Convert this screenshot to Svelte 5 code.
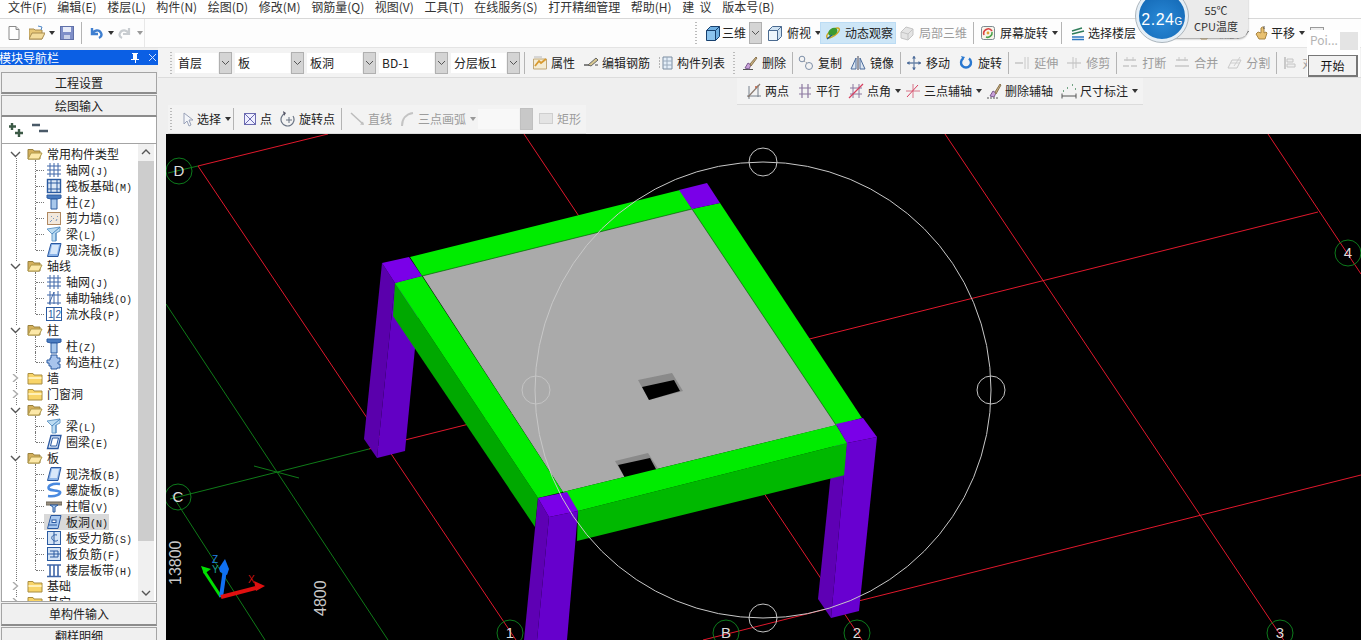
<script>
  const menus = ['文件(F)', '编辑(E)', '楼层(L)', '构件(N)', '绘图(D)', '修改(M)', '钢筋量(Q)', '视图(V)', '工具(T)', '在线服务(S)', '打开精细管理', '帮助(H)', '建\u00a0\u00a0议', '版本号(B)'];

  const icons = {
    file: `<path d="M3 1.500h7l3 3v10H3z" fill="#fff" stroke="#8a8a8a"/><path d="M10 1.500v3h3" fill="#ddd" stroke="#8a8a8a"/>`,
    open: `<path d="M0 4h5l1 1h7v9H0z" fill="#e8c878" stroke="#a88c50"/><path d="M0 14l3-6h13l-3 6z" fill="#f3dc9c" stroke="#a88c50"/><path d="M9 1l4 1-1 3" fill="none" stroke="#4c86c8"/>`,
    save: `<rect x="1.500" y="1.500" width="13" height="13" fill="#7f8fc8" stroke="#6070a8"/><rect x="4" y="2" width="8" height="5" fill="#e8ecf8"/><rect x="5" y="10" width="6" height="4" fill="#c8d0e8"/>`,
    undo: `<path d="M4 3v6h6M4.500 8.500C6 5 11 4 13 8c1 2 0 4-2 5" fill="none" stroke="#3f7fd0" stroke-width="2.400"/>`,
    redo: `<path d="M12 3v6H6M11.500 8.500C10 5 5 4 3 8c-1 2 0 4 2 5" fill="none" stroke="#c8ccd0" stroke-width="2.200"/>`,
    cube: `<path d="M1.500 5.500l4-4h9v10l-4 4h-9z" fill="#6fb0e2" stroke="#17406e"/><path d="M1.500 5.500h9v10M10.500 5.500l4-4" fill="none" stroke="#17406e"/><path d="M2 6h8v9H2z" fill="#8cc4ee"/>`,
    cubeLight: `<path d="M1.500 5.500l4-4h9v10l-4 4h-9z" fill="#cfe2f2" stroke="#4a6a90"/><path d="M1.500 5.500h9v10M10.500 5.500l4-4" fill="none" stroke="#4a6a90"/><path d="M2 6h8v9H2z" fill="#eef6fc"/>`,
    orbit: `<ellipse cx="8" cy="8" rx="7.500" ry="3" transform="rotate(-35 8 8)" fill="none" stroke="#d0a820" stroke-width="1.500"/><ellipse cx="8.500" cy="7" rx="5" ry="3.600" transform="rotate(-35 8 8)" fill="#3c9a30"/><path d="M2 14l5-4" stroke="#1f5a8a" stroke-width="1.500"/>`,
    cubeGray: `<path d="M2 7l5-5 7 2v6l-5 5-7-2z" fill="#e4e4e4" stroke="#c4c4c4"/><path d="M2 7l7 2v6M9 9l5-5" fill="none" stroke="#c4c4c4"/>`,
    screen: `<rect x="1.500" y="1.500" width="13" height="13" rx="2" fill="#f8f4ea" stroke="#7a8a90"/><path d="M4 10a4.500 4.500 0 0 1 8-4" fill="none" stroke="#d84040" stroke-width="1.600"/><path d="M12 7a4.500 4.500 0 0 1-6 5" fill="none" stroke="#48a048" stroke-width="1.600"/><circle cx="8" cy="8" r="1.400" fill="#e0a030"/>`,
    floors: `<path d="M2 6l10-3M2 9l12-3" fill="none" stroke="#2f7d5a" stroke-width="1.400"/><path d="M2 12h12M2 14.500h12" stroke="#2f78c0" stroke-width="1.400"/>`,
    hand: `<path d="M3 9l3 5h6l2-6-1-1-2 1V3l-1.500-1L8 3v5L5 7z" fill="#e8c070" stroke="#a88440"/><path d="M11 1v3" stroke="#555"/>`,
    view: `<rect x="1.500" y="2.500" width="13" height="11" fill="#eee" stroke="#999"/><path d="M3 11l4-4 3 3 3-4" fill="none" stroke="#aaa"/>`,
    prop: `<path d="M1.500 4h13v10h-13z" fill="#f4ecd4" stroke="#c0a878"/><path d="M3 11l4-5 2 2 5-4" fill="none" stroke="#d89a30" stroke-width="1.800"/><path d="M2 2h8" stroke="#b8b8b8"/>`,
    pencil: `<path d="M1 10h7" stroke="#444" stroke-width="1.300"/><path d="M5 10l8-7 2 2-7 6z" fill="#d8c890" stroke="#666"/><path d="M12 10h3" stroke="#444"/>`,
    list: `<path d="M5 2h9v12H5z" fill="#e4eef8" stroke="#7a8ca0"/><path d="M9 2v12M5 6h9M5 10h9" stroke="#9aaabc"/><path d="M1 3h2M1 6h2M1 9h2M1 12h2" stroke="#777" stroke-dasharray="1 1"/>`,
    erase: `<path d="M1 14.500h10" stroke="#555"/><path d="M3 13l3-5 3 2-2 4z" fill="#c8a0d8" stroke="#7a5a90"/><path d="M8 9l6-7 1 1-6 8z" fill="#c8b080" stroke="#8a7450"/>`,
    copy: `<circle cx="4" cy="4" r="2.800" fill="none" stroke="#7d8fa8"/><circle cx="11" cy="11" r="3.500" fill="none" stroke="#7d8fa8"/><path d="M6 6l3 2" stroke="#999" stroke-dasharray="1.500 1"/>`,
    mirror: `<path d="M8 1v14" stroke="#445" /><path d="M6 3v11H1zM10 3v11h5z" fill="#dce6f2" stroke="#4a6a9a"/>`,
    move: `<path d="M8 1v14M1 8h14" stroke="#6a84a8" stroke-width="1.300"/><path d="M8 1l-2 2.500h4zM8 15l-2-2.500h4zM1 8l2.500-2v4zM15 8l-2.500-2v4z" fill="#4a6a98"/>`,
    rotate: `<path d="M11 3.500a5 5 0 1 1-6 0" fill="none" stroke="#2a78d0" stroke-width="2.400"/><path d="M3 1l4 1-2 3z" fill="#2a78d0"/>`,
    extend: `<path d="M1 8h8" stroke="#c4c4c4" stroke-width="1.500"/><path d="M11 2v12M14 2v12" stroke="#c8c8c8"/>`,
    trim: `<path d="M1 8h14" stroke="#ccc" stroke-width="1.500"/><path d="M7 2v12M10 3v10" stroke="#c4c4c4"/>`,
    breakIc: `<path d="M1 11h6M9 11h6M2 5h12" stroke="#c8c8c8" stroke-width="1.500"/><path d="M5 2v4M11 2v4" stroke="#c8c8c8"/>`,
    merge: `<path d="M1 11h14M2 5h12" stroke="#c8c8c8" stroke-width="1.500"/><path d="M5 2v4M11 2v4" stroke="#c8c8c8"/>`,
    split: `<path d="M2 13l4-8h9l-4 8z" fill="none" stroke="#c8c8c8"/><path d="M4 8h10M14 2L8 11" stroke="#cfcfcf"/>`,
    align: `<path d="M3 2v12" stroke="#bbb" stroke-width="1.500"/><path d="M5 4h6v3H5zM5 9h8v3H5z" fill="#eee" stroke="#c4c4c4"/>`,
    twoPt: `<path d="M1 13h14M3 3v13M12 2v12" stroke="#77808c"/><path d="M2 14L14 1" stroke="#8a7a70" stroke-width="1.200"/><circle cx="10" cy="4" r="1" fill="#c06040"/>`,
    para: `<path d="M2 5h12M2 11h12M5 1v14M11 1v14" stroke="#8c78a0" stroke-width="1.200"/>`,
    angle: `<path d="M2 5h12M2 11h12M5 1v14M11 1v14" stroke="#8c78a0"/><path d="M1 15L15 1" stroke="#d84060" stroke-width="1.200"/>`,
    three: `<path d="M1 8h14M8 1v14" stroke="#d8768a"/><path d="M2 14L13 2" stroke="#d84060"/>`,
    eraseAxis: `<path d="M1 15h11" stroke="#555" stroke-dasharray="2 1"/><path d="M4 13l3-5 3 2-2 4z" fill="#c8a0d8" stroke="#7a5a90"/><path d="M9 9l5-8 1 1-5 9z" fill="#c8b080" stroke="#8a7450"/>`,
    dim: `<path d="M1 13h14M1 10.500v5M15 10.500v5" stroke="#555"/><path d="M2 8h1M6 5h1M11 2h1M14 6h1" stroke="#4a8a60" stroke-width="1.500"/>`,
    cursor: `<path d="M4 2v11l3-3 2 5 2-1-2-5h4z" fill="#f4f6fa" stroke="#9aa2b8"/>`,
    point: `<rect x="2.500" y="2.500" width="11" height="11" fill="#eef" stroke="#6a6ab0"/><path d="M3 3l10 10M13 3L3 13" stroke="#6a6ab0"/>`,
    rotPt: `<path d="M13 5a6.500 6.500 0 1 1-8-2.500" fill="none" stroke="#6a7484" stroke-width="1.200"/><path d="M3 0l3 2-2 3z" fill="#556"/><path d="M9 6v6M6 9h6" stroke="#6a7484"/>`,
    line: `<path d="M1 2l12 11" stroke="#bcbcbc" stroke-width="1.500"/><path d="M14 14l-4-.500 3-3z" fill="#c0c0c0"/>`,
    arc: `<path d="M2 15C2 8 6 3 13 2" fill="none" stroke="#c4c4c4" stroke-width="2"/>`,
    rect: `<rect x="1.500" y="2.500" width="13" height="10" fill="#e4e4e4" stroke="#cfcfcf"/>`,
    folderOpen: `<path d="M1 3.500h5l1 1.500h6v8H1z" fill="#d4b05c" stroke="#98803c"/><path d="M1 13l3-6h11l-3 6z" fill="#fce8a8" stroke="#b09848"/>`,
    folder: `<path d="M1 3.500h5l1 1.500h8v9H1z" fill="#f8d468" stroke="#a88c40"/><path d="M1.500 7h13v2h-13z" fill="#fff0b8"/>`,
    grid: `<path d="M4 1v14M8 1v14M12 1v14M1 4h14M1 8h14M1 12h14" stroke="#3f66a8"/>`,
    raft: `<rect x="1.500" y="1.500" width="13" height="13" fill="#dce8f6" stroke="#2a5aa0" stroke-width="1.400"/><path d="M5 1v14M11 1v14M1 5h14M1 11h14" stroke="#2a5aa0"/>`,
    col: `<path d="M1 1h14v3l-4 1H5L1 4z" fill="#4a7cc0" stroke="#2a5aa0"/><path d="M5 5h6v10H5z" fill="#a8c8ec" stroke="#2a5aa0"/>`,
    wall: `<rect x="1.500" y="2.500" width="13" height="12" fill="#f2e8dc" stroke="#b08860"/><path d="M4 12l2-2M7 8l1 1M10 11l1-2M11 6l1 1M5 6l1 1" stroke="#7a98c0"/>`,
    beam: `<path d="M1 3l13-2v4l-4 2v8H6V8z" fill="#bcdcf2" stroke="#6a9cc8"/><path d="M6 8l8-7M10 7v8" stroke="#4a86c0"/>`,
    slab: `<path d="M5 1.500h10l-3 13H1.500z" fill="#8cb4e8" stroke="#2a58a0"/><path d="M6 3h7l-2 9H4z" fill="#d8e8fa"/>`,
    aux: `<path d="M1 13h14M1 5h14M4 1v14M12 1v14" stroke="#3f66a8"/><path d="M3 14L8 2M8 2v12" stroke="#3f66a8"/>`,
    seg: `<rect x="0.500" y="1.500" width="15" height="13" fill="#fff" stroke="#2a5aa0"/><path d="M8 1v14" stroke="#2a5aa0"/><text x="2" y="12" font-size="10" font-family="Liberation Sans" fill="#2a5aa0">1</text><text x="9.500" y="12" font-size="10" font-family="Liberation Sans" fill="#2a5aa0">2</text>`,
    struct: `<path d="M5 1h6v3h3v4h-2v2h2v4h-3v1H5v-3H3v-3H1V6h3V4h1z" fill="#a8c4ec" stroke="#2a5aa0"/>`,
    ring: `<path d="M5 1.500h10l-3 13H1.500z" fill="#d8e6f8" stroke="#2a58a0" stroke-width="1.300"/><path d="M6.500 4h6l-2 8h-6z" fill="#fff" stroke="#2a58a0"/>`,
    spiral: `<path d="M14 2C6 1 1 4 3 7c2 2 9 1 11 3 1 2-4 5-12 4" fill="none" stroke="#4a8ae0" stroke-width="2.600"/>`,
    cap: `<path d="M0 4h16v3H0z" fill="#9a9080" stroke="#6a6458"/><path d="M4 7h8l-3 2v5H7V9z" fill="#a8c8ec" stroke="#2a5aa0"/>`,
    hole: `<path d="M5 1.500h10l-3 13H1.500z" fill="#a8c8f0" stroke="#2a58a0"/><rect x="6" y="6" width="4" height="2.500" fill="#fff" stroke="#2a58a0"/><path d="M3 11h8" stroke="#2a58a0"/>`,
    bar: `<rect x="1.500" y="1.500" width="13" height="13" fill="#d4e4f6" stroke="#2a5aa0"/><path d="M11 5C7 4 5 7 6 9s4 3 6 1M8 2v12" fill="none" stroke="#2a5aa0"/>`,
    neg: `<rect x="1.500" y="1.500" width="13" height="13" fill="#d4e4f6" stroke="#2a5aa0"/><path d="M4 5h8v6H4M1 8h14M8 5v6" fill="none" stroke="#2a5aa0"/>`,
    strip: `<path d="M1 3h14M1 14.500h14" stroke="#3f66a8" stroke-width="1.400"/><path d="M4 3v11M8 3v11M12 3v11" stroke="#3f66a8" stroke-width="1.600"/>`
  };

  // m = extra space before the item, g = space between icon and label
  const fileTools = [
    { i: 'file', m: 6 }, { i: 'open', m: 7, caret: true }, { i: 'save', m: 4 }, { sep: true, m: 6 },
    { i: 'undo', m: 6, caret: true }, { i: 'redo', m: 3, caret: true, off: true }
  ];

  const viewTools = [
    { i: 'cube', t: '三维', combo: true, m: 8, g: 1 }, { i: 'cubeLight', t: '俯视', caret: true, m: 5 }, { i: 'orbit', t: '动态观察', on: true },
    { i: 'cubeGray', t: '局部三维', off: true, m: 4 }, { sep: true, m: 6 }, { i: 'screen', t: '屏幕旋转', caret: true, m: 6 }, { sep: true, m: 3 },
    { i: 'floors', t: '选择楼层', m: 8, g: 2 }, { i: 'hand', t: '缩放', caret: true, m: 59 }, { i: 'hand', t: '平移', caret: true, m: 4, g: 2 }, { i: 'view', m: 4 }
  ];

  const combos = [
    { t: '首层', w: 43 }, { t: '板', w: 55 }, { t: '板洞', w: 55 }, { t: 'BD-1', w: 55 }, { t: '分层板1', w: 55 }
  ];

  const editTools = [
    { i: 'prop', t: '属性', g: 3, m: 5 }, { i: 'pencil', t: '编辑钢筋', g: 3 }, { i: 'list', t: '构件列表', g: 3 }
  ];

  const modifyTools = [
    { i: 'erase', t: '删除' }, { sep: true }, { i: 'copy', t: '复制' }, { i: 'mirror', t: '镜像' }, { sep: true }, { i: 'move', t: '移动' }, { i: 'rotate', t: '旋转' }, { sep: true },
    { i: 'extend', t: '延伸', off: true }, { i: 'trim', t: '修剪', off: true }, { sep: true }, { i: 'breakIc', t: '打断', off: true }, { i: 'merge', t: '合并', off: true }, { i: 'split', t: '分割', off: true }, { sep: true }, { i: 'align', t: '对齐', off: true }
  ];

  const axisTools = [
    { i: 'twoPt', t: '两点', g: 3 }, { i: 'para', t: '平行', g: 3 }, { i: 'angle', t: '点角', caret: true, g: 3 }, { i: 'three', t: '三点辅轴', caret: true, g: 3 }, { i: 'eraseAxis', t: '删除辅轴', g: 3 }, { i: 'dim', t: '尺寸标注', caret: true, g: 3 }
  ];

  const drawTools = [
    { i: 'cursor', t: '选择', caret: true, g: 1 }, { sep: true }, { i: 'point', t: '点', g: 2 }, { i: 'rotPt', t: '旋转点', g: 3 }, { sep: true }, { i: 'line', t: '直线', off: true, g: 2 }, { i: 'arc', t: '三点画弧', caret: true, off: true, g: 2 }, { blank: true }, { i: 'rect', t: '矩形', off: true, g: 3 }
  ];

  const tree = [
    { t: '常用构件类型', open: true, kids: [['grid', '轴网', 'J'], ['raft', '筏板基础', 'M'], ['col', '柱', 'Z'], ['wall', '剪力墙', 'Q'], ['beam', '梁', 'L'], ['slab', '现浇板', 'B']] },
    { t: '轴线', open: true, kids: [['grid', '轴网', 'J'], ['aux', '辅助轴线', 'O'], ['seg', '流水段', 'P']] },
    { t: '柱', open: true, kids: [['col', '柱', 'Z'], ['struct', '构造柱', 'Z']] },
    { t: '墙', open: false, kids: [] },
    { t: '门窗洞', open: false, kids: [] },
    { t: '梁', open: true, kids: [['beam', '梁', 'L'], ['ring', '圈梁', 'E']] },
    { t: '板', open: true, kids: [['slab', '现浇板', 'B'], ['spiral', '螺旋板', 'B'], ['cap', '柱帽', 'V'], ['hole', '板洞', 'N'], ['bar', '板受力筋', 'S'], ['neg', '板负筋', 'F'], ['strip', '楼层板带', 'H']] },
    { t: '基础', open: false, kids: [] },
    { t: '其它', open: false, kids: [] }
  ];

  const redLines = [
    '198,166 328,134', '198,166 516,640', '369,449 1318,212', '524,134 862,640', '945,134 1285,642', '1268,134 1361,274', '703,640 1361,475'
  ];
  const greenLines = ['168,173 198,166', '170,499 369,449', '166,304 388,640', '172,495 265,640', '254,466 299,478'];
  const axes = [['D', 179, 171], ['C', 178, 497], ['1', 510, 633], ['B', 726, 633], ['2', 857, 633], ['3', 1280, 633], ['4', 1348, 253]];
  const handles = [[763, 162], [536, 390], [991, 390], [763, 618]];
</script>

{#snippet tool(x)}
  {#if x.sep}
    <span class="sep" style={x.m ? `margin-left:${x.m}px` : ''}></span>
  {:else if x.blank}
    <span class="combo disabled"><span class="field"></span><span class="drop"></span></span>
  {:else}
    <span class="tool" class:off={x.off} class:on={x.on} class:carets={x.caret} style={x.m ? `margin-left:${x.m}px` : ''}>
      <svg class="ic" viewBox="0 0 16 16">{@html icons[x.i]}</svg>
      {#if x.t}<span class="lab" style={x.g ? `margin-left:${x.g}px` : ''}>{x.t}</span>{/if}
      {#if x.combo}<span class="drop"><svg viewBox="0 0 9 6"><path d="M1 1l3.500 3.500L8 1" fill="none" stroke="#555" /></svg></span>{/if}
      {#if x.caret}<i class="caret"></i>{/if}
    </span>
  {/if}
{/snippet}

<div class="app">
  <nav class="menubar">
    {#each menus as m}<span>{m}</span>{/each}
  </nav>

  <div class="topbar">
    <div class="tools file">
      {#each fileTools as x}{@render tool(x)}{/each}
    </div>
    <div class="tools views">
      <i class="grip"></i>
      {#each viewTools as x}{@render tool(x)}{/each}
    </div>
  </div>

  <div class="workspace">
    <aside class="sidebar">
      <header>
        <span>模块导航栏</span>
        <svg viewBox="0 0 28 12"><path d="M3 1h6v1H8v5h2v1H7v3H6V8H2V7h2V2H3z" fill="#fff"/><path d="M20 2l7 7M27 2l-7 7" stroke="#cfe0ff"/></svg>
      </header>
      <button class="nav first">工程设置</button>
      <button class="nav">绘图输入</button>
      <div class="expand">
        <svg viewBox="0 0 42 16"><path d="M4 1v7M1 4.500h7M11 7v8M7 11h8" stroke="#3c5a46" stroke-width="2.400"/><path d="M24 3h8M31 9h9" stroke="#4a5a68" stroke-width="2.400"/></svg>
      </div>
      <div class="tree">
        <div class="rows">
          {#each tree as g}
            <div class="row root">
              <svg class="chev" viewBox="0 0 11 8">
                {#if g.open}<path d="M1 2l4.500 4.500L10 2" fill="none" stroke="#555" stroke-width="1.400"/>
                {:else}<path d="M3 0l4.500 4L3 8" fill="none" stroke="#aaa" stroke-width="1.400"/>{/if}
              </svg>
              <svg class="folder" viewBox="0 0 16 16">{@html icons[g.open ? 'folderOpen' : 'folder']}</svg>
              <span class="cn">{g.t}</span>
            </div>
            {#each g.kids as k, n}
              <div class="row kid" class:last={n === g.kids.length - 1}>
                <span class="item" class:sel={k[2] === 'N'}>
                  <svg class="ic" viewBox="0 0 16 16">{@html icons[k[0]]}</svg>
                  <span class="cn">{k[1]}<span class="key">({k[2]})</span></span>
                </span>
              </div>
            {/each}
          {/each}
        </div>
        <div class="scroll">
          <svg viewBox="0 0 16 17"><path d="M4 10l4-4 4 4" fill="none" stroke="#555" stroke-width="1.400"/></svg>
          <div class="track"><div class="thumb"></div></div>
          <svg viewBox="0 0 16 17"><path d="M4 7l4 4 4-4" fill="none" stroke="#555" stroke-width="1.400"/></svg>
        </div>
      </div>
      <button class="nav tall">单构件输入</button>
      <button class="nav cut">翻样明细</button>
    </aside>

    <section class="main">
      <div class="band property">
        <i class="grip"></i>
        {#each combos as c}
          <span class="combo"><span class="field" style="width:{c.w}px">{c.t}</span><span class="drop"><svg viewBox="0 0 9 6"><path d="M1 1l3.500 3.500L8 1" fill="none" stroke="#555" /></svg></span></span>
        {/each}
        <span class="sep first"></span>
        {#each editTools as x}{@render tool(x)}{/each}
        <i class="grip wide"></i>
        {#each modifyTools as x}{@render tool(x)}{/each}
      </div>
      <div class="band axis">
        {#each axisTools as x}{@render tool(x)}{/each}
      </div>
      <div class="band draw">
        <i class="grip"></i>
        {#each drawTools as x}{@render tool(x)}{/each}
      </div>

      <div class="canvas">
        <svg viewBox="166 134 1195 506" width="1195" height="506">
          {#each greenLines as p}<polyline points={p} class="gl" />{/each}
          {#each redLines as p}<polyline points={p} class="rl" />{/each}

          <!-- far left column -->
          <polygon points="382,263 395,283 377,458 364,439" fill="#5a00ac" />
          <polygon points="395,283 422,276 405,451 377,458" fill="#6200c4" />

          <!-- near right column, hidden side -->
          <polygon points="836,424 847,443 831,618 818,599" fill="#5e00b4" />

          <!-- slab and holes -->
          <polygon points="422,275 693,208 837,425 563,492" fill="#aaaaaa" />
          <polygon points="638,380 672,373 683,391 649,400" fill="#8a8a8a" />
          <polygon points="642,387 674,380 680,391 649,400" fill="#000" />
          <polygon points="615,461 648,453 659,470 625,478" fill="#8a8a8a" />
          <polygon points="618,465 650,458 657,471 625,478" fill="#000" />

          <!-- beams -->
          <polygon points="410,257 680,190 692,209 422,276" fill="#00ec00" />
          <polygon points="692,209 720,203 862,418 836,425" fill="#00ec00" />
          <polygon points="395,283 393,316 535,527 538,498" fill="#00a800" />
          <polygon points="395,283 422,276 563,492 538,498" fill="#00ec00" />
          <polygon points="578,511 847,443 845,475 577,541" fill="#00b800" />
          <polygon points="563,492 836,425 847,443 578,511" fill="#00ec00" />
          <polyline points="692,209 836,425" class="seam" />
          <polyline points="422,276 692,209" class="seam" />

          <!-- columns in front of the beams -->
          <polygon points="847,443 877,437 859,611 831,618" fill="#6800d0" />
          <polygon points="538,498 549,517 537,640 524,640" fill="#5e00b4" />
          <polygon points="549,517 578,511 567,640 537,640" fill="#6600cc" />

          <!-- column tops -->
          <polygon points="382,263 409,257 422,276 395,283" fill="#7a00e8" />
          <polygon points="679,190 707,183 720,203 692,209" fill="#7a00e8" />
          <polygon points="538,498 567,492 578,511 549,517" fill="#7a00e8" />
          <polygon points="836,424 863,418 877,437 847,443" fill="#7a00e8" />

          <!-- orbit handles -->
          <circle cx="763" cy="390" r="228" class="orbit" />
          {#each handles as h}<circle cx={h[0]} cy={h[1]} r="14" class="handle" />{/each}

          {#each axes as a}
            <circle cx={a[1]} cy={a[2]} r="13" class="bubble" />
            <text x={a[1]} y={a[2] + 5} class="tag">{a[0]}</text>
          {/each}

          <text transform="translate(181 585) rotate(-90)" class="dimtext">13800</text>
          <text transform="translate(326 616) rotate(-90)" class="dimtext">4800</text>

          <!-- axis triad -->
          <path d="M221 597L204 571" stroke="#00e000" stroke-width="3" />
          <path d="M201 566l10 3-7 5z" fill="#00e000" />
          <path d="M221 597L225 569" stroke="#1070f0" stroke-width="4" />
          <path d="M225 559l4 10-2 6-7-3-1-4z" fill="#1070f0" />
          <path d="M221 597L256 588" stroke="#e01010" stroke-width="4" />
          <path d="M265 586l-11-5 2 10z" fill="#e01010" />
          <text x="248" y="583" class="ax" fill="#d01010">X</text>
          <text x="212" y="563" class="ax" fill="#2080e0">Z</text>
          <text x="212" y="573" class="ax" fill="#20a090">Y</text>
        </svg>
      </div>
    </section>
  </div>

  <!-- floating cpu widget -->
  <div class="cpu">
    <div class="temp"><span>55℃</span><span>CPU温度</span></div>
    <div class="ball">2.24<small>G</small></div>
  </div>

  <div class="pop">
    <div class="poi"><span>Poi...</span><i></i></div>
    <button>开始</button>
  </div>
</div>

<style>
  :global(body) {
    margin: 0;
    overflow: hidden;
  }
  .app {
    position: relative;
    width: 1361px;
    height: 640px;
    overflow: hidden;
    background: #efefef;
    color: #222;
    font-family: "Noto Sans CJK SC", "Liberation Sans", sans-serif;
    font-size: 12px;
    line-height: 16px;
  }
  .menubar {
    display: flex;
    gap: 10.6px;
    height: 18px;
    padding-left: 8px;
    background: #fff;
    border-bottom: 1px solid #d8d8d8;
    align-items: flex-start;
    color: #333;
    line-height: 13px;
  }
  .topbar {
    display: flex;
    justify-content: space-between;
    height: 28px;
    background: #fdfdfd;
    border-bottom: 1px solid #e4e4e4;
  }
  .tools {
    display: flex;
    align-items: center;
  }
  .tools.file {
    padding-right: 1px;
    border-right: 1px solid #e8e8e8;
  }
  .tools.views {
    width: 666px;
    flex: none;
    overflow: hidden;
  }
  .grip {
    display: block;
    width: 2px;
    height: 22px;
    flex: none;
    background: repeating-linear-gradient(#bbb 0 1px, transparent 1px 3px);
  }
  .tool {
    display: inline-flex;
    align-items: center;
    height: 20px;
    white-space: nowrap;
    flex: none;
  }
  .lab {
    margin-left: 4px;
  }
  .tool.off {
    color: #9c9c9c;
  }
  .tool.on {
    background: #cde6f7;
    outline: 1px solid #bcdcf4;
    padding: 0 2px 0 4px;
  }
  .ic {
    width: 16px;
    height: 16px;
    flex: none;
  }
  .caret {
    width: 0;
    height: 0;
    margin-left: 4px;
    border: 3.500px solid transparent;
    border-top: 4px solid #333;
    border-bottom: 0;
  }
  .tool.off .caret {
    border-top-color: #999;
  }
  .sep {
    width: 1px;
    height: 22px;
    background: #b4b4b4;
    flex: none;
  }
  .drop {
    display: flex;
    align-items: center;
    justify-content: center;
    width: 13px;
    height: 22px;
    background: #d4d4d4;
    border: 1px solid #b0b0b0;
    box-sizing: border-box;
    flex: none;
  }
  .tool .drop {
    margin-left: 3px;
  }
  .drop svg {
    width: 9px;
    height: 6px;
  }
  .combo {
    display: flex;
    gap: 1px;
    align-items: center;
    flex: none;
  }
  .field {
    height: 20px;
    line-height: 20px;
    padding-left: 3px;
    box-sizing: border-box;
    background: #fff;
  }
  .combo.disabled {
    margin: 0 -3px 0 -2px;
  }
  .combo.disabled .field {
    width: 41px;
    background: #f8f8f8;
  }
  .combo.disabled .drop {
    background: #c8c8c8;
    border-color: #c0c0c0;
  }
  .workspace {
    display: flex;
    height: 592px;
  }
  .sidebar {
    width: 158px;
    height: 592px;
    flex: none;
    display: flex;
    flex-direction: column;
    padding-top: 2px;
    box-sizing: border-box;
    overflow: hidden;
  }
  .sidebar header {
    display: flex;
    justify-content: space-between;
    align-items: center;
    height: 15px;
    flex: none;
    padding-right: 1px;
    background: #0b5fe4;
    color: #fff;
    overflow: hidden;
  }
  .sidebar header span {
    margin-left: -1px;
  }
  .sidebar header svg {
    width: 28px;
    height: 12px;
  }
  .nav {
    flex: none;
    width: 156px;
    height: 22px;
    margin: 1px 0 0 1px;
    padding: 0;
    font: inherit;
    color: #222;
    background: #f0f0f0;
    border: 1px solid #a4a4a4;
    border-bottom: 2px solid #8c8c8c;
    box-sizing: border-box;
  }
  .nav.first {
    margin-top: 7px;
  }
  .nav.tall {
    height: 23px;
  }
  .nav.cut {
    height: 22px;
    padding-bottom: 7px;
  }
  .expand {
    height: 27px;
    flex: none;
    margin: 0 1px;
    padding-left: 6px;
    background: #fff;
    border: 1px solid #a4a4a4;
    border-width: 0 1px 1px;
    box-sizing: border-box;
    display: flex;
    align-items: center;
  }
  .expand svg {
    width: 42px;
    height: 16px;
  }
  .tree {
    flex: none;
    height: 458px;
    box-sizing: border-box;
    display: flex;
    margin: 0 1px;
    background: #fff;
    border: 1px solid #a4a4a4;
    border-top: 0;
    overflow: hidden;
    position: relative;
  }
  .rows {
    flex: 1;
    padding-top: 2px;
    overflow: hidden;
    position: relative;
  }
  .rows::before {
    content: "";
    position: absolute;
    left: 14px;
    top: 10px;
    bottom: 0;
    border-left: 1px dotted #777;
  }
  .row {
    position: relative;
    display: flex;
    align-items: center;
    height: 16px;
    white-space: nowrap;
  }
  .chev {
    position: relative;
    z-index: 1;
    width: 11px;
    height: 8px;
    margin-left: 8px;
    background: #fff;
    flex: none;
  }
  .folder {
    width: 16px;
    height: 16px;
    margin-left: 6px;
    flex: none;
  }
  .root .cn {
    margin-left: 4px;
  }
  .kid {
    padding-left: 42px;
  }
  .kid::before {
    content: "";
    position: absolute;
    left: 33px;
    top: -2px;
    height: 18px;
    border-left: 1px dotted #777;
  }
  .kid.last::before {
    height: 10px;
  }
  .kid::after {
    content: "";
    position: absolute;
    left: 34px;
    width: 8px;
    top: 8px;
    border-top: 1px dotted #777;
  }
  .item {
    display: flex;
    align-items: center;
    gap: 4px;
    padding: 0 1px 0 2px;
  }
  .item.sel {
    background: #d9d9d9;
  }
  .cn {
    height: 16px;
  }
  .key {
    font-family: "Liberation Mono", monospace;
    font-size: 10px;
  }
  .scroll {
    width: 16px;
    flex: none;
    display: flex;
    flex-direction: column;
    background: #f0f0f0;
    margin-right: 2px;
  }
  .scroll svg {
    width: 16px;
    height: 17px;
    flex: none;
  }
  .track {
    flex: 1;
  }
  .thumb {
    height: 380px;
    background: #cdcdcd;
  }
  .main {
    flex: 1;
    min-width: 0;
    display: flex;
    flex-direction: column;
  }
  .band {
    display: flex;
    align-items: center;
    gap: 8px;
    box-sizing: border-box;
    background: #f3f3f3;
    border-bottom: 1px solid #dcdcdc;
    white-space: nowrap;
    overflow: hidden;
    flex: none;
  }
  .band .tool.carets {
    margin-right: -4px;
  }
  .property {
    height: 30px;
    padding-left: 12px;
    gap: 2px;
    width: 1203px;
  }
  .property .combo {
    margin-left: 1px;
  }
  .property .tool {
    margin-left: 6px;
  }
  .property .sep {
    margin-left: 4px;
  }
  .property .sep.first {
    margin-left: 2px;
  }
  .property .sep + .tool {
    margin-left: 3px;
  }
  .property .grip.wide {
    margin: 0 -1px 0 6px;
  }
  .axis {
    height: 27px;
    width: 406px;
    margin-left: 579px;
    padding-left: 9px;
  }
  .draw {
    height: 29px;
    width: 418px;
    margin-left: 10px;
    padding-left: 2px;
  }
  .draw .sep {
    margin-left: -2px;
  }
  .canvas {
    margin-left: 8px;
    flex: 1;
    min-height: 0;
    background: #000;
    overflow: hidden;
  }
  .canvas svg {
    display: block;
  }
  .rl {
    fill: none;
    stroke: #e0182c;
  }
  .gl {
    fill: none;
    stroke: #0f7a18;
  }
  .seam {
    fill: none;
    stroke: #0a5a0a;
    stroke-width: 0.7;
  }
  .orbit {
    fill: none;
    stroke: #c8c8c8;
  }
  .handle {
    fill: none;
    stroke: #c4c4c4;
  }
  .bubble {
    fill: none;
    stroke: #0d7a1c;
  }
  .tag {
    fill: #dcdcdc;
    font: 15px "Liberation Sans", sans-serif;
    text-anchor: middle;
  }
  .dimtext {
    fill: #c8c8c8;
    font: 16px "Liberation Sans", sans-serif;
  }
  .ax {
    font: 10px "Liberation Sans", sans-serif;
  }
  .cpu {
    position: absolute;
    left: 1136px;
    top: -10px;
  }
  .ball {
    position: absolute;
    left: 0;
    top: 0;
    width: 52px;
    height: 52px;
    box-sizing: border-box;
    border: 3px solid #e4eef6;
    outline: 1px solid #aab4bc;
    border-radius: 50%;
    background: radial-gradient(circle at 50% 60%, #2a8ad8, #0f62ae);
    color: #fff;
    font: 16px/54px "Liberation Sans", sans-serif;
    letter-spacing: 0.5px;
    text-align: center;
    white-space: nowrap;
  }
  .ball small {
    font-size: 10px;
  }
  .temp {
    position: absolute;
    left: 34px;
    top: 0;
    width: 78px;
    height: 48px;
    padding: 12px 0 0 14px;
    box-sizing: border-box;
    background: #ebebeb;
    border-radius: 0 0 9px 0;
    box-shadow: 0 1px 2px #999;
    display: flex;
    flex-direction: column;
    align-items: center;
    font-size: 11px;
    color: #333;
  }
  .pop {
    position: absolute;
    left: 1307px;
    top: 30px;
    width: 53px;
    height: 47px;
    background: #fff;
  }
  .poi {
    display: flex;
    justify-content: space-between;
    padding: 2px 2px 0 3px;
    color: #b4b4b4;
  }
  .poi i {
    width: 18px;
    height: 18px;
    background: #e4e4e4;
  }
  .pop button {
    position: absolute;
    left: 1px;
    top: 25px;
    width: 50px;
    height: 22px;
    padding: 0;
    font: inherit;
    color: #111;
    background: #f2f2f2;
    border: 1px solid #777;
    border-width: 1px 2px 2px 1px;
  }
</style>
